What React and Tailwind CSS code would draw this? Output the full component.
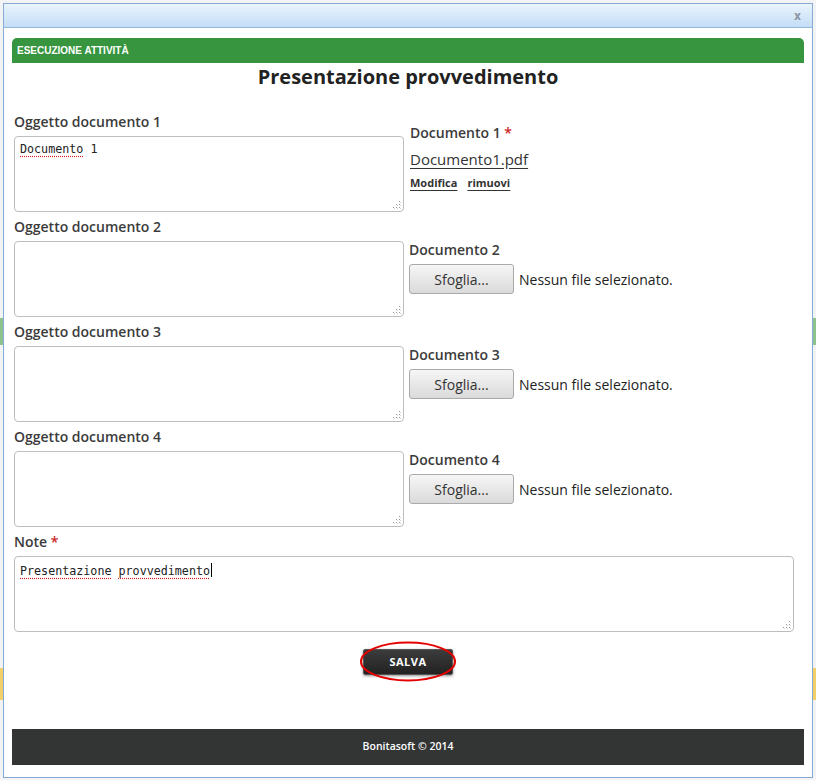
const body = { fontFamily: '"Open Sans", "DejaVu Sans", sans-serif' };
const mono = { fontFamily: '"DejaVu Sans Mono", "Liberation Mono", monospace' };

function Grip() {
  return (
    <svg className="absolute bottom-[2px] right-[2px]" width="9" height="9" viewBox="0 0 9 9">
      {[[7, 1], [7, 4], [4, 4], [7, 7], [4, 7], [1, 7]].map(([x, y]) => (
        <rect key={`${x}-${y}`} x={x} y={y} width="1" height="1" fill="#9a9a9a" />
      ))}
      {[[8, 2], [8, 5], [5, 5], [8, 8], [5, 8], [2, 8]].map(([x, y]) => (
        <rect key={`s${x}-${y}`} x={x} y={y} width="1" height="1" fill="#d6d6d6" />
      ))}
    </svg>
  );
}

function Area({ wide, children }) {
  return (
    <div
      className={`relative h-[76px] ${wide ? 'w-[780px]' : 'w-[390px]'} rounded-[4px] border border-[#bdbdbd] bg-white px-[5px] pt-[4px] text-[11.7px] leading-[16px] text-[#222]`}
      style={mono}
    >
      {children}
      <Grip />
    </div>
  );
}

function Typo({ children }) {
  return <span className="underline decoration-dotted decoration-[#e02020] underline-offset-[3px]">{children}</span>;
}

function FilePicker({ n }) {
  return (
    <div className="pt-[23px] pl-[5px]">
      <p className="h-[20px] text-[14px] leading-[20px] font-semibold text-[#3b3b3b]">Documento {n}</p>
      <div className="mt-[4px] flex items-center gap-[5px]">
        <button className="h-[30px] w-[105px] rounded-[3px] border border-[#a9a9a9] bg-gradient-to-b from-[#f6f6f6] to-[#dadada] text-[14px] text-[#333]">
          Sfoglia...
        </button>
        <span className="text-[14px] text-[#222]">Nessun file selezionato.</span>
      </div>
    </div>
  );
}

function Row({ n, text, right }) {
  return (
    <div className="flex h-[105px]">
      <div className="w-[390px]">
        <p className="h-[20px] text-[14px] leading-[20px] font-semibold text-[#3b3b3b]">Oggetto documento {n}</p>
        <div className="mt-[4px]">
          <Area>{text}</Area>
        </div>
      </div>
      {right}
    </div>
  );
}

export default function App() {
  return (
    <div className="relative h-[780px] w-[816px] overflow-hidden bg-[#f2f3f4] p-[3px]" style={body}>
      {/* page peeking out behind the dialog */}
      <div className="absolute left-0 top-[318px] h-[27px] w-[3px] bg-[#8fc18f]" />
      <div className="absolute right-0 top-[318px] h-[27px] w-[3px] bg-[#8fc18f]" />
      <div className="absolute left-0 top-[668px] h-[32px] w-[3px] bg-[#f3cf6a]" />
      <div className="absolute right-0 top-[668px] h-[32px] w-[3px] bg-[#f3cf6a]" />

      <div className="relative flex h-[775px] w-[810px] flex-col border border-[#87acd3] bg-white">
        {/* window title bar */}
        <div className="flex h-[24px] items-center justify-end border-b border-[#92b9de] bg-gradient-to-b from-[#eaf4fd] to-[#c4ddf6] pr-[11px]">
          <span className="text-[12px] font-bold leading-none text-[#8a96a3]" style={{ fontFamily: '"DejaVu Sans Condensed", "DejaVu Sans", sans-serif' }}>x</span>
        </div>

        <div className="flex flex-1 flex-col px-[8px] pt-[10px]">
          <div className="flex h-[25px] items-center rounded-t-[5px] bg-[#36953e] pl-[5px]">
            <span className="text-[10px] font-bold text-white" style={{ fontFamily: '"Liberation Sans", Arial, sans-serif' }}>ESECUZIONE ATTIVITÀ</span>
          </div>

          <h1 className="mt-[1px] h-[26px] text-center text-[20px] leading-[26px] font-bold text-[#222]">
            Presentazione provvedimento
          </h1>

          <div className="mt-[22px] pl-[2px]">
            <Row
              n={1}
              text={<><Typo>Documento</Typo> 1</>}
              right={
                <div className="pt-[11px] pl-[6px]">
                  <p className="h-[20px] text-[14px] leading-[20px] font-semibold text-[#3b3b3b]">
                    Documento 1 <span className="text-[#cc1f1f]">*</span>
                  </p>
                  <a className="mt-[6px] block h-[20px] text-[15px] leading-[20px] text-[#333] underline underline-offset-[3px]">Documento1.pdf</a>
                  <div className="mt-[6px] flex gap-[10px] text-[11px] leading-[16px] font-bold text-[#333]">
                    <a className="underline underline-offset-[3px]">Modifica</a>
                    <a className="underline underline-offset-[3px]">rimuovi</a>
                  </div>
                </div>
              }
            />
            <Row n={2} right={<FilePicker n={2} />} />
            <Row n={3} right={<FilePicker n={3} />} />
            <Row n={4} right={<FilePicker n={4} />} />

            <p className="h-[20px] text-[14px] leading-[20px] font-semibold text-[#3b3b3b]">
              Note <span className="text-[#cc1f1f]">*</span>
            </p>
            <div className="mt-[4px]">
              <Area wide>
                <Typo>Presentazione</Typo> <Typo>provvedimento</Typo>
                <span className="ml-[1px] inline-block h-[14px] w-[1px] translate-y-[2px] bg-black" />
              </Area>
            </div>
          </div>

          <div className="mt-[16px] flex justify-center">
            <div className="relative">
              <button className="h-[26px] w-[90px] rounded-[2px] border border-[#555] bg-gradient-to-b from-[#3c3c3c] to-[#222] text-[11px] font-bold tracking-[0.5px] text-white shadow-[0_1px_3px_rgba(0,0,0,0.45)]">
                SALVA
              </button>
              <svg className="pointer-events-none absolute left-[-4px] top-[-7px]" width="98" height="41" viewBox="0 0 98 41">
                <ellipse cx="49" cy="20.5" rx="47" ry="19" fill="none" stroke="#e30000" strokeWidth="2" />
              </svg>
            </div>
          </div>

          <div className="mt-auto mb-[12px] flex h-[36px] items-center justify-center bg-[#333535]">
            <span className="text-[10.5px] font-semibold text-white">Bonitasoft © 2014</span>
          </div>
        </div>
      </div>
    </div>
  );
}
